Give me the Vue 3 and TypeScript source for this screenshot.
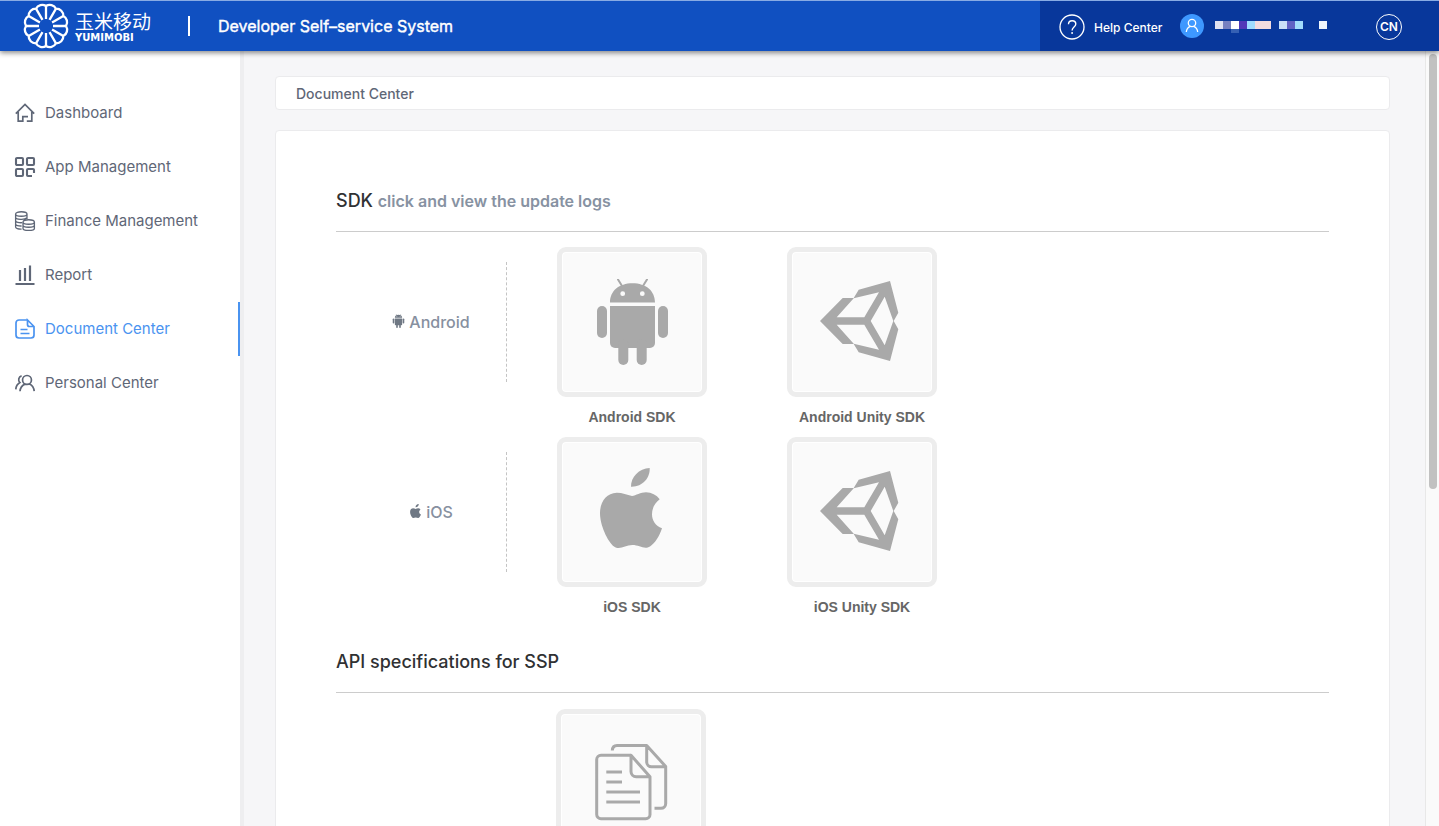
<script setup lang="ts">
type IconName = 'home' | 'apps' | 'finance' | 'report' | 'document' | 'person'
type TileIcon = 'android' | 'unity' | 'apple'

interface NavItem {
  label: string
  icon: IconName
  active?: boolean
}

interface Platform {
  name: string
  icon: TileIcon
  items: { label: string; icon: TileIcon }[]
}

const nav: NavItem[] = [
  { label: 'Dashboard', icon: 'home' },
  { label: 'App Management', icon: 'apps' },
  { label: 'Finance Management', icon: 'finance' },
  { label: 'Report', icon: 'report' },
  { label: 'Document Center', icon: 'document', active: true },
  { label: 'Personal Center', icon: 'person' },
]

const platforms: Platform[] = [
  {
    name: 'Android',
    icon: 'android',
    items: [
      { label: 'Android SDK', icon: 'android' },
      { label: 'Android Unity SDK', icon: 'unity' },
    ],
  },
  {
    name: 'iOS',
    icon: 'apple',
    items: [
      { label: 'iOS SDK', icon: 'apple' },
      { label: 'iOS Unity SDK', icon: 'unity' },
    ],
  },
]

const glyphs: Record<IconName, string> = {
  home: 'M.8 10.6 10 1.4l9.200 9.200M3.200 9v9.200h4.600V13.600h5.200M16.800 9v9.200h-5',
  apps: 'M2 1h5a1 1 0 0 1 1 1v5a1 1 0 0 1-1 1H2a1 1 0 0 1-1-1V2a1 1 0 0 1 1-1zM13 1h5a1 1 0 0 1 1 1v5a1 1 0 0 1-1 1h-5a1 1 0 0 1-1-1V2a1 1 0 0 1 1-1zM2 12h5a1 1 0 0 1 1 1v5a1 1 0 0 1-1 1H2a1 1 0 0 1-1-1v-5a1 1 0 0 1 1-1zM17 19h-4a1 1 0 0 1-1-1v-5a1 1 0 0 1 1-1h5a1 1 0 0 1 1 1v3',
  finance:
    'M.600 3c0-3 11.400-3 11.400 0s-11.400 3-11.400 0v13c0 1.500 2.500 2.300 6 2.200M.600 6.300c0 2.400 9 3 11.400.500M.600 9.600c0 1.700 3.500 2.300 6.500 2.100M.600 12.900c0 1.600 3 2.200 6 2.100M12 3v5M8 11c0-3 11.400-3 11.400 0s-11.400 3-11.400 0v6.500c0 2.600 11.400 2.600 11.400 0V11M8 14.300c0 2.600 11.400 2.600 11.400 0',
  report: 'M.5 19h19M5 5v11M10 3v13M15 .5v15.500',
  document:
    'M12.500 1H4a3 3 0 0 0-3 3v12a3 3 0 0 0 3 3h12a3 3 0 0 0 3-3V7.500L12.500 1v4.500a2 2 0 0 0 2 2H19M5.500 10.500h7M5.500 14.500h9',
  person:
    'M12 2.500a4.400 4.400 0 0 1 0 8.900a4.400 4.400 0 0 1 0-8.900zM5 18.300c.3-3.600 2.200-6 5-7.200M14.500 10.900c2.800 1.300 4.400 3.900 4.700 7.200M6.600 2.900C3.600 3.600 2.700 7.400 4.900 9.600C2.500 11 1 13.400.800 16.400',
}

/* The brand wheel: twelve spokes joined by scallops at the rim. */
const rim = Array.from({ length: 12 }, (_, i) => {
  const a = (i * Math.PI) / 6
  return { x: Math.cos(a), y: Math.sin(a) }
})
const at = (i: number, r: number) => `${(23 + rim[i % 12].x * r).toFixed(2)} ${(23 + rim[i % 12].y * r).toFixed(2)}`
const spokes = rim.map((_, i) => `M${at(i, 7)}L${at(i, 20)}`).join('')
const scallops = `M${at(0, 20)}` + rim.map((_, i) => `A7 7 0 0 1 ${at(i + 1, 20)}`).join('')

const blocks = [
  { x: 0, c: '#dfe1f1' },
  { x: 8, c: '#7780c0' },
  { x: 16, c: '#ffffff' },
  { x: 24, c: '#5237b8' },
  { x: 32, c: '#9fdcff' },
  { x: 40, c: '#f2dbe0' },
  { x: 48, c: '#f2dbe0' },
  { x: 64, c: '#c8e0f8' },
  { x: 72, c: '#6062c4' },
  { x: 80, c: '#a2dcfb' },
  { x: 104, c: '#eef5fc' },
]
</script>

<template>
  <div class="page">
    <svg class="defs" width="0" height="0" aria-hidden="true">
      <symbol id="android" viewBox="0 0 71 86">
        <path d="M21 .5l5 8M50 .5l-5 8" fill="none" stroke="currentColor" stroke-width="2" stroke-linecap="round" />
        <path
          fill-rule="evenodd"
          d="M13 23.500C13 12 22 4.300 35.500 4.300S58 12 58 23.500zM25.700 12.300a2.400 2.400 0 1 0 0 4.800a2.400 2.400 0 0 0 0-4.800zM45.300 12.300a2.400 2.400 0 1 0 0 4.800a2.400 2.400 0 0 0 0-4.800z"
        />
        <path d="M13 27h45v37a5 5 0 0 1-5 5H18a5 5 0 0 1-5-5z" />
        <rect x="0" y="27" width="10" height="32" rx="5" />
        <rect x="61" y="27" width="10" height="32" rx="5" />
        <rect x="21.300" y="60" width="10" height="26" rx="5" />
        <rect x="39.700" y="60" width="10" height="26" rx="5" />
      </symbol>
      <symbol id="unity" viewBox="0 0 79 80">
        <path
          fill-rule="evenodd"
          d="M0 40 22.700 17H33.700L38.700 8.700 70 0 78.300 31.700 73.700 40 78.300 48.300 70 80 38.700 71.300 33.700 63H22.700zM16.700 36.300H44.300L59 11.300 33.700 17.300zM16.700 43.700 33.700 62.700 59 68.700 44.300 43.700zM50.700 40 64.700 64.300 73.300 40 64.700 15.700z"
        />
      </symbol>
      <symbol id="apple" viewBox="0 0 62 80">
        <path d="M49.700 0C50.300 10 42 19.200 31 18.700C30.700 9 39 .5 49.700 0z" />
        <path
          d="M32 28C27 26.800 22 24.600 16.700 24.700C6.500 25 0 33.500 0 45.300C0 57 7.500 73.500 14 78.500C20 82.500 25 77 32.300 77S44 82 50 78.500C55 75.500 60 67 62 60.300C55.500 58 52 52.500 52 46.300C52 40 55 35 59.700 31.300C56.500 27 51.500 24.400 46 24.300C40.500 24.300 36 27.500 32 28z"
        />
      </symbol>
    </svg>

    <header class="topbar">
      <a class="brand" href="#" aria-label="玉米移动 YUMIMOBI">
        <svg class="wheel" viewBox="0 0 46 46" aria-hidden="true">
          <path :d="spokes" />
          <path :d="scallops" />
        </svg>
        <span class="brand-text">
          <span class="brand-cn">玉米移动</span>
          <span class="brand-en">YUMIMOBI</span>
        </span>
      </a>
      <span class="divider"></span>
      <h1 class="title">Developer Self–service System</h1>
      <div class="account">
        <a class="help" href="#">
          <svg width="26" height="26" viewBox="0 0 26 26" fill="none" stroke="#fff" aria-hidden="true">
            <circle cx="13" cy="13" r="12" stroke-width="1.3" />
            <path d="M9.500 10.300c0-4.800 7.300-4.600 7.300-.2 0 3-3.700 3-3.700 6.300M13.100 18v2" stroke-width="1.400" />
          </svg>
          Help Center
        </a>
        <a class="user" href="#" aria-label="Account">
          <svg width="24" height="24" viewBox="0 0 24 24" fill="none" aria-hidden="true">
            <circle cx="12" cy="12" r="12" fill="#3e98ff" />
            <circle cx="12" cy="9" r="3.700" stroke="#fff" stroke-width="1.300" />
            <path d="M6.300 18c.3-3 1.900-5 4.200-5.700M17.700 18c-.3-3-1.900-5-4.200-5.700" stroke="#fff" stroke-width="1.300" />
          </svg>
          <svg class="name" width="112" height="12" viewBox="0 0 112 12" shape-rendering="crispEdges" aria-hidden="true">
            <rect v-for="b in blocks" :key="b.x" :x="b.x" y="0" width="8" height="8" :fill="b.c" />
            <rect x="16" y="8" width="8" height="4" fill="#3560b4" />
          </svg>
        </a>
        <button class="lang" type="button">CN</button>
      </div>
    </header>

    <div class="body">
      <nav class="sidebar">
        <a v-for="item in nav" :key="item.label" href="#" class="nav-item" :class="{ active: item.active }">
          <svg class="nav-icon" :class="item.icon" viewBox="0 0 20 20" aria-hidden="true">
            <path :d="glyphs[item.icon]" />
          </svg>
          <span class="nav-label">{{ item.label }}</span>
        </a>
      </nav>

      <main class="content">
        <div class="crumb">Document Center</div>

        <div class="card">
          <section class="section">
            <h2 class="heading">SDK <a class="logs" href="#">click and view the update logs</a></h2>
            <div v-for="p in platforms" :key="p.name" class="row">
              <div class="platform">
                <svg class="mini" :class="p.icon" aria-hidden="true"><use :href="'#' + p.icon" /></svg>
                {{ p.name }}
              </div>
              <a v-for="t in p.items" :key="t.label" class="entry" href="#">
                <span class="tile">
                  <svg :class="t.icon" aria-hidden="true"><use :href="'#' + t.icon" /></svg>
                </span>
                <span class="caption">{{ t.label }}</span>
              </a>
            </div>
          </section>

          <section class="section">
            <h2 class="heading">API specifications for SSP</h2>
            <div class="row api">
              <a class="entry" href="#" aria-label="API document">
                <span class="tile">
                  <svg class="docs" viewBox="0 0 73 78" aria-hidden="true">
                    <path d="M36 12.300H6A4.300 4.300 0 0 0 1.700 16.600V71.500A4.300 4.300 0 0 0 6 75.800H50.700A4.300 4.300 0 0 0 55 71.500V33.700L36 12.300V28.500A5.200 5.200 0 0 0 41.200 33.700H55" />
                    <path d="M17.300 7.500C17.500 4.300 19 2.500 22 2.500H51.700L70.700 23.500V60.500A4.800 4.800 0 0 1 66 65.300H59.500M51.700 2.500V19A4.800 4.800 0 0 0 56.500 23.800H70.700" />
                    <path d="M11.300 29H27M11.300 39H27M11.300 49H45M11.300 59H45" />
                  </svg>
                </span>
              </a>
            </div>
          </section>
        </div>
      </main>

      <div class="track" aria-hidden="true"><div class="thumb"></div></div>
    </div>
  </div>
</template>

<style>
html,
body {
  margin: 0;
  overflow: hidden;
}
</style>

<style scoped>
.page {
  height: 100vh;
  display: flex;
  flex-direction: column;
  overflow: hidden;
  background: #f6f6f8;
  color: #5f6777;
  font-family: Inter, 'Liberation Sans', 'Noto Sans CJK SC', sans-serif;
  font-size: 15px;
}

.page * {
  box-sizing: border-box;
}

.defs {
  position: absolute;
}

a {
  color: inherit;
  text-decoration: none;
}

.topbar {
  flex: none;
  height: 51px;
  display: flex;
  align-items: center;
  background: #1050c1;
  border-top: 1px solid #88abe4;
  color: #fff;
  box-shadow: 0 2px 5px rgba(0, 0, 0, 0.45);
  z-index: 2;
}

.brand {
  display: flex;
  align-items: center;
  gap: 6px;
  margin-left: 23px;
}

.wheel {
  width: 46px;
  height: 46px;
  fill: none;
  stroke: #fff;
  stroke-width: 2.3;
}

.brand-text {
  display: flex;
  flex-direction: column;
  width: 76px;
}

.brand-cn {
  font: 19px/24px 'Noto Sans CJK SC', sans-serif;
}

.brand-en {
  font: bold 10px/10px 'DejaVu Sans', sans-serif;
}

.divider {
  width: 2px;
  height: 20px;
  margin: 0 28px 0 37px;
  background: #fff;
}

.title {
  margin: 0;
  font-size: 16px;
  font-weight: 400;
  -webkit-text-stroke: 0.4px #fff;
}

.account {
  align-self: stretch;
  width: 399px;
  margin-left: auto;
  padding: 0 37px 0 19px;
  display: flex;
  align-items: center;
  background: #08379b;
}

.help {
  display: flex;
  align-items: center;
  gap: 9px;
  padding-top: 2px;
  font-size: 12px;
  font-weight: 500;
}

.user {
  display: flex;
  align-items: center;
  gap: 11px;
  margin-left: 18px;
}

.name {
  margin-top: 2px;
}

.lang {
  width: 26px;
  height: 26px;
  margin: 2px 0 0 auto;
  padding: 0;
  border: 1px solid #fff;
  border-radius: 13px;
  background: none;
  color: #fff;
  font: 600 12px/24px Inter, sans-serif;
}

.body {
  flex: 1;
  min-height: 0;
  display: flex;
}

.sidebar {
  flex: none;
  width: 244px;
  padding-top: 35px;
  background: #fff;
  border-right: 4px solid #eeeef0;
}

.nav-item {
  height: 54px;
  display: flex;
  align-items: center;
  gap: 10px;
  padding-left: 15px;
  border-right: 2px solid transparent;
}

.nav-item.active {
  color: #4a93f0;
  border-right-color: #4a93f0;
}

.nav-label {
  padding-bottom: 2px;
}

.nav-icon {
  width: 20px;
  height: 20px;
  fill: none;
  stroke: currentColor;
  stroke-width: 1.7;
  overflow: visible;
}

.nav-icon.apps {
  stroke-width: 2.1;
}

.nav-icon.report {
  stroke-width: 2.2;
}

.nav-icon.finance {
  stroke-width: 1.3;
}

.content {
  flex: 1;
  min-width: 0;
  padding: 25px 35px 0 31px;
}

.crumb {
  height: 34px;
  padding-left: 20px;
  border: 1px solid #ebebed;
  border-radius: 4px;
  background: #fff;
  font-size: 14px;
  font-weight: 500;
  line-height: 34px;
}

.card {
  margin-top: 20px;
  padding: 41px 60px 60px;
  border: 1px solid #ebebed;
  border-radius: 4px;
  background: #fff;
}

.section + .section {
  margin-top: 6px;
}

.heading {
  margin: 0 0 15px;
  padding-bottom: 1px;
  border-bottom: 1px solid #ccc;
  color: #303133;
  font-size: 18px;
  font-weight: 500;
  line-height: 58px;
}

.logs {
  color: #8792a2;
  font-size: 16px;
  font-weight: 600;
}

.row {
  height: 190px;
  display: flex;
  align-items: flex-start;
  gap: 80px;
}

.row.api {
  padding: 1px 0 0 220px;
}

.platform {
  width: 151px;
  height: 120px;
  margin: 15px -30px 0 20px;
  display: flex;
  align-items: center;
  justify-content: center;
  gap: 4px;
  border-right: 1px dashed #c4c4c4;
  color: #8790a0;
  font-size: 16px;
  font-weight: 500;
}

.mini {
  width: 13px;
  height: 14px;
  margin-bottom: 2px;
  fill: currentColor;
  color: #6f7884;
}

.entry {
  width: 150px;
}

.tile {
  height: 150px;
  display: flex;
  align-items: center;
  justify-content: center;
  border: 5px solid #ededed;
  border-radius: 9px;
  background: #fafafa;
  box-shadow: inset 0 0 0 1px #fff;
}

.tile svg {
  fill: #a9a9a9;
  color: #a9a9a9;
}

.tile .android {
  width: 71px;
  height: 86px;
}

.tile .unity {
  width: 79px;
  height: 80px;
  margin: 0 6px 2px 0;
}

.tile .apple {
  width: 62px;
  height: 80px;
  margin: 0 2px 8px 0;
}

.tile .docs {
  width: 73px;
  height: 78px;
  margin-bottom: 4px;
  fill: none;
  stroke: #a9a9a9;
  stroke-width: 3;
  stroke-linejoin: round;
}

.caption {
  display: block;
  margin-top: 10px;
  color: #666;
  font: bold 14px/20px 'Liberation Sans', Arial, sans-serif;
  text-align: center;
}

.track {
  flex: none;
  width: 14px;
  padding: 3px 2px 0 3px;
  background: #fafafa;
  border-left: 1px solid #e8e8e8;
}

.thumb {
  width: 8px;
  height: 435px;
  border-radius: 4px;
  background: #c1c1c1;
}
</style>
